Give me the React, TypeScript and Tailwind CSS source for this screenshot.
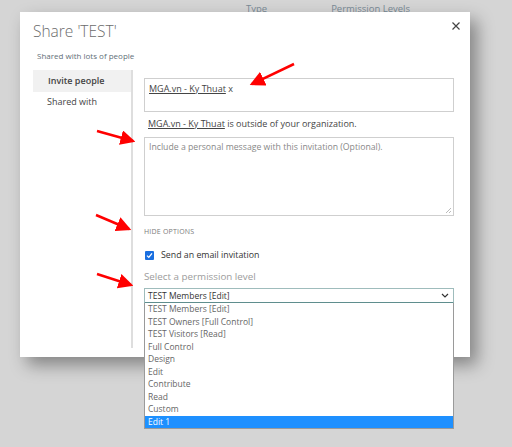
const options = [
  "TEST Members [Edit]",
  "TEST Owners [Full Control]",
  "TEST Visitors [Read]",
  "Full Control",
  "Design",
  "Edit",
  "Contribute",
  "Read",
  "Custom",
  "Edit 1",
];

const Arrows = () => (
  <svg className="pointer-events-none absolute left-0 top-0" width="512" height="447">
    <defs>
      <marker id="head" markerWidth="6" markerHeight="6" refX="5" refY="3" orient="auto" markerUnits="strokeWidth">
        <path d="M0,0 L6,3 L0,6 z" fill="#ff0000" />
      </marker>
    </defs>
    <g stroke="#ff0000" strokeWidth="2.5" fill="none" markerEnd="url(#head)">
      <line x1="294" y1="64" x2="252" y2="84" />
      <line x1="97" y1="131" x2="133" y2="141" />
      <line x1="96" y1="215" x2="129" y2="229" />
      <line x1="97" y1="274" x2="131" y2="285" />
    </g>
  </svg>
);

export default function App() {
  return (
    <div className="relative h-[447px] w-[512px] overflow-hidden bg-[#d5d5d5] font-['Open_Sans',sans-serif]">
      <div className="flex h-[12px] items-end text-[9.5px] leading-none text-[#7a8a96]">
        <span className="ml-[246px] -mb-[1px]">Type</span>
        <span className="ml-[64px] -mb-[1px]">Permission Levels</span>
      </div>

      <div className="absolute left-[20px] top-[12px] h-[345px] w-[450px] bg-white shadow-[7px_8px_16px_rgba(0,0,0,0.38)]">
        <button className="absolute right-[10px] top-[10px]">
          <svg width="8" height="8" viewBox="0 0 8 8">
            <path d="M0.5,0.5 L7.5,7.5 M7.5,0.5 L0.5,7.5" stroke="#444" strokeWidth="1.2" />
          </svg>
        </button>
        <div className="flex flex-col pl-[13px] pt-[9px]">
          <h1 className="text-[15.5px] font-light leading-[20px] text-[#6b6b6b]">Share 'TEST'</h1>
          <p className="mt-[9px] pl-[4px] text-[8px] leading-[12px] text-[#5f6f78]">Shared with lots of people</p>

          <div className="mt-[8px] flex">
            <div className="flex w-[98px] flex-col text-[9px] text-[#444]">
              <div className="flex h-[22px] items-center bg-[#f1f1f1] pl-[15px] font-semibold">Invite people</div>
              <div className="flex h-[20px] items-center pl-[14px]">Shared with</div>
            </div>
            <div className="h-[278px] w-[2px] bg-[#dedede]" />
            <div className="relative flex w-[310px] flex-col pl-[11px]">
              <div className="mt-[8px] h-[34px] w-[310px] border border-[#cfcfcf] px-[4px] pt-[3px] text-[9px] leading-[13.5px] text-[#444]">
                <span className="underline">MGA.vn - Ky Thuat</span> x
              </div>
              <p className="mt-[4px] pl-[4px] text-[9px] leading-[16px] text-[#444]">
                <span className="underline">MGA.vn - Ky Thuat</span> is outside of your organization.
              </p>
              <div className="relative mt-[5px] h-[79px] w-[310px] border border-[#cfcfcf] px-[4px] pt-[3px] text-[8.7px] leading-[13px] text-[#888]">
                Include a personal message with this invitation (Optional).
                <svg className="absolute bottom-[1px] right-[1px]" width="7" height="7">
                  <path d="M1,6 L6,1 M4,6 L6,4" stroke="#aaa" strokeWidth="0.8" />
                </svg>
              </div>
              <p className="mt-[10px] text-[7px] leading-[12px] tracking-[0.2px] text-[#7a7a7a]">HIDE OPTIONS</p>
              <label className="mt-[11px] flex h-[12px] items-center gap-[7px] pl-[1px] text-[8.8px] leading-[12px] text-[#333]">
                <span className="flex h-[9px] w-[9px] items-center justify-center rounded-[1px] bg-[#1a6fe0]">
                  <svg width="7" height="7" viewBox="0 0 7 7">
                    <path d="M1,3.6 L2.8,5.4 L6,1.4" stroke="white" strokeWidth="1.3" fill="none" />
                  </svg>
                </span>
                Send an email invitation
              </label>
              <p className="mt-[9px] text-[9.8px] leading-[14px] text-[#9c9c9c]">Select a permission level</p>
              <div className="relative mt-[4px] w-[310px]">
                <div className="flex h-[16px] items-center justify-between border border-b-2 border-[#9fbcbc] border-b-[#5f8e8e] pl-[3px] pr-[4px] text-[8.5px] leading-[12px] text-[#333]">
                  <span>TEST Members [Edit]</span>
                  <svg width="8" height="5" viewBox="0 0 8 5">
                    <path d="M1,1 L4,4 L7,1" stroke="#333" strokeWidth="1.2" fill="none" />
                  </svg>
                </div>
                <ul className="absolute left-0 top-[15px] z-10 w-[310px] border border-t-0 border-[#9a9a9a] bg-white text-[8.5px] leading-[12px] text-[#666]">
                  {options.map((o, i) => (
                    <li
                      key={o}
                      className={
                        i === options.length - 1
                          ? "flex h-[12.5px] items-center bg-[#1e90ff] pl-[3px] text-white"
                          : "flex h-[12.5px] items-center pl-[3px]"
                      }
                    >
                      {o}
                    </li>
                  ))}
                </ul>
              </div>
            </div>
          </div>
        </div>
      </div>

      <Arrows />
    </div>
  );
}
